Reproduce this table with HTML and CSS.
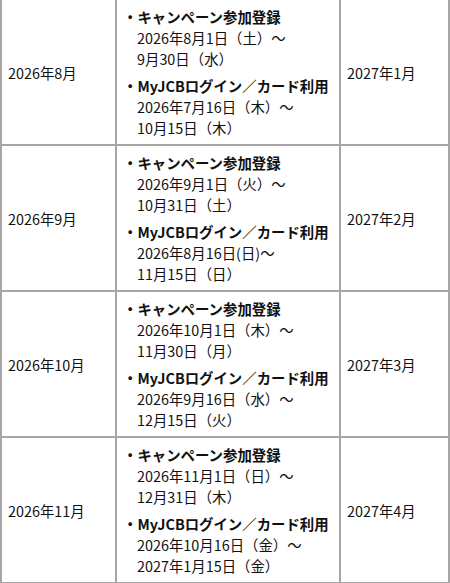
FILE: index.html
```html
<!DOCTYPE html>
<html lang="ja">
<head>
<meta charset="utf-8">
<title>Schedule</title>
<link rel="stylesheet" href="styles.css">
</head>
<body>
<table class="schedule">
  <colgroup>
    <col class="c-month">
    <col class="c-period">
    <col class="c-pay">
  </colgroup>
  <tbody>
    <tr>
      <td class="month">2026年8月</td>
      <td class="period">
        <div class="item"><p class="title">・キャンペーン参加登録</p><p class="date">2026年8月1日（土）～<br>9月30日（水）</p></div>
        <div class="item"><p class="title">・MyJCBログイン／カード利用</p><p class="date">2026年7月16日（木）～<br>10月15日（木）</p></div>
      </td>
      <td class="pay">2027年1月</td>
    </tr>
    <tr>
      <td class="month">2026年9月</td>
      <td class="period">
        <div class="item"><p class="title">・キャンペーン参加登録</p><p class="date">2026年9月1日（火）～<br>10月31日（土）</p></div>
        <div class="item"><p class="title">・MyJCBログイン／カード利用</p><p class="date">2026年8月16日(日)～<br>11月15日（日）</p></div>
      </td>
      <td class="pay">2027年2月</td>
    </tr>
    <tr>
      <td class="month">2026年10月</td>
      <td class="period">
        <div class="item"><p class="title">・キャンペーン参加登録</p><p class="date">2026年10月1日（木）～<br>11月30日（月）</p></div>
        <div class="item"><p class="title">・MyJCBログイン／カード利用</p><p class="date">2026年9月16日（水）～<br>12月15日（火）</p></div>
      </td>
      <td class="pay">2027年3月</td>
    </tr>
    <tr>
      <td class="month">2026年11月</td>
      <td class="period">
        <div class="item"><p class="title">・キャンペーン参加登録</p><p class="date">2026年11月1日（日）～<br>12月31日（木）</p></div>
        <div class="item"><p class="title">・MyJCBログイン／カード利用</p><p class="date">2026年10月16日（金）～<br>2027年1月15日（金）</p></div>
      </td>
      <td class="pay">2027年4月</td>
    </tr>
  </tbody>
</table>
</body>
</html>
```
FILE: styles.css
```css
html, body {
  margin: 0;
  padding: 0;
  background: #fff;
}
body {
  font-family: "Noto Sans CJK JP", "Noto Sans", sans-serif;
  font-size: 14.4px;
  line-height: 21px;
  color: #111;
}
.schedule {
  border-collapse: collapse;
  table-layout: fixed;
  width: 448px;
  margin-top: -2px;
}
.c-month { width: 115px; }
.c-period { width: 224px; }
.c-pay { width: 109px; }
.schedule td {
  border: 2px solid #a6a6a6;
  vertical-align: middle;
  padding: 6px 6px;
}
.month, .pay {
  padding-left: 7px;
}
.period {
  padding-left: 7px;
}
.item + .item {
  margin-top: 6px;
}
.item p {
  margin: 0;
  padding-left: 14px;
}
.item .title {
  font-weight: 700;
  text-indent: -14px;
}
```
